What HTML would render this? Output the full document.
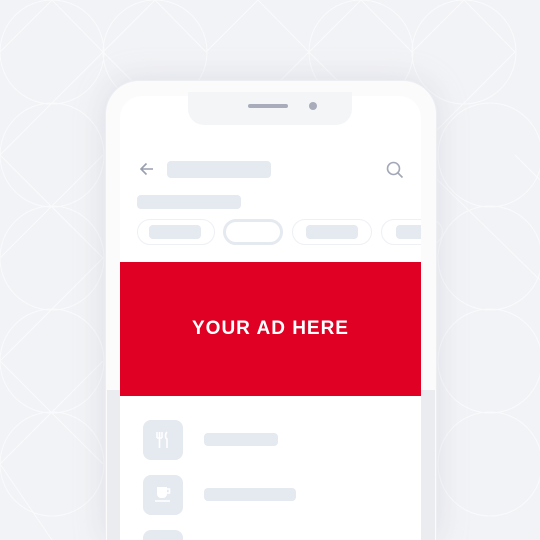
<!DOCTYPE html>
<html><head><style>
html,body{margin:0;padding:0;width:540px;height:540px;overflow:hidden}
body{background:#f2f3f6;position:relative;font-family:"Liberation Sans",sans-serif}
.a{position:absolute}
.bar{position:absolute;background:#e5e9f0;border-radius:4px}
</style></head><body>
<svg class="a" style="left:0;top:0" width="540" height="540">
<g stroke="#fff" stroke-width="1" fill="none" opacity="0.6">
<path d="M0 52 L52 0 M52 0 L103 52 M103 52 L155 0 L206 52 M206 52 L258 0 L309 52 M309 52 L361 0 L412 52 M412 52 L464 0 L515 52"/>
<path d="M0 155 L103 52 L206 155 L309 52 L412 155 L515 52 M0 155 L103 258 M0 258 L103 155 M0 361 L103 258 M0 361 L103 464 M0 464 L103 361 M0 464 L52 540 M515 155 L540 180 M412 155 L540 280"/>
<circle cx="52" cy="52" r="52"/><circle cx="155" cy="52" r="52"/><circle cx="361" cy="52" r="52"/><circle cx="464" cy="52" r="52"/>
<circle cx="52" cy="155" r="52"/><circle cx="52" cy="258" r="52"/><circle cx="52" cy="361" r="52"/><circle cx="52" cy="464" r="52"/>
<circle cx="490" cy="155" r="52"/><circle cx="490" cy="258" r="52"/><circle cx="490" cy="361" r="52"/><circle cx="490" cy="464" r="52"/>
</g></svg>
<div class="a" style="left:105px;top:80px;width:332px;height:460px;background:#fbfbfc;border-radius:34px 34px 0 0;box-shadow:0 0 30px rgba(180,185,200,0.35);border:1px solid #eceef2;border-bottom:none;box-sizing:border-box"></div>
<div class="a" style="left:107px;top:390px;width:13px;height:150px;background:#ebecef"></div>
<div class="a" style="left:421px;top:390px;width:14px;height:150px;background:#ebecef"></div>
<div class="a" style="left:120px;top:96px;width:301px;height:444px;background:#fff;border-radius:22px 22px 0 0"></div>
<div class="a" style="left:188px;top:92px;width:164px;height:33px;background:#f4f5f7;border-radius:0 0 16px 16px"></div>
<div class="a" style="left:248px;top:104px;width:40px;height:4px;background:#a9adbb;border-radius:2px"></div>
<div class="a" style="left:309px;top:102px;width:8px;height:8px;background:#a9adbb;border-radius:50%"></div>
<svg class="a" style="left:139px;top:161px" width="16" height="16"><path d="M14 8H2M7.5 2.5L2 8l5.5 5.5" stroke="#9a9fb0" stroke-width="1.6" fill="none"/></svg>
<div class="bar" style="left:167px;top:161px;width:104px;height:17px"></div>
<svg class="a" style="left:385px;top:160px" width="20" height="20"><circle cx="8.5" cy="8.5" r="6" stroke="#a3a8b8" stroke-width="1.6" fill="none"/><path d="M13 13l4.5 4.5" stroke="#a3a8b8" stroke-width="1.6"/></svg>
<div class="bar" style="left:137px;top:195px;width:104px;height:14px"></div>
<div class="a" style="left:137px;top:219px;width:76px;height:24px;border:1px solid #eef0f4;border-radius:13px"></div>
<div class="bar" style="left:149px;top:225px;width:52px;height:14px"></div>
<div class="a" style="left:223px;top:219px;width:54px;height:20px;border:3px solid #e5e9f0;border-radius:13px"></div>
<div class="a" style="left:292px;top:219px;width:78px;height:24px;border:1px solid #eef0f4;border-radius:13px"></div>
<div class="bar" style="left:306px;top:225px;width:52px;height:14px"></div>
<div class="a" style="left:381px;top:219px;width:60px;height:24px;border:1px solid #eef0f4;border-radius:13px"></div>
<div class="bar" style="left:396px;top:225px;width:40px;height:14px"></div>
<div class="a" style="left:421px;top:215px;width:15px;height:40px;background:#fbfbfc"></div>
<div class="a" style="left:120px;top:262px;width:301px;height:134px;background:#e00024;color:#fff;font-weight:bold;font-size:19px;letter-spacing:1px;text-align:center;line-height:134px">YOUR AD HERE</div>
<div class="a" style="left:143px;top:420px;width:40px;height:40px;background:#e5e9f0;border-radius:8px"></div>
<svg class="a" style="left:155px;top:431px" width="16" height="18"><path d="M2 1v6M4.5 1v6M7 1v6M2 7h5M4.5 7v10M12 1c-2 2-2 6 0 7v9" stroke="#fff" stroke-width="1.6" fill="none"/></svg>
<div class="bar" style="left:204px;top:433px;width:74px;height:13px"></div>
<div class="a" style="left:143px;top:475px;width:40px;height:40px;background:#e5e9f0;border-radius:8px"></div>
<svg class="a" style="left:154px;top:486px" width="20" height="18"><path d="M3 1h10v7a4 4 0 0 1-4 4H7a4 4 0 0 1-4-4z" fill="#fff"/><path d="M13 3h2.5v4H13" stroke="#fff" stroke-width="1.6" fill="none"/><path d="M1 15h15" stroke="#fff" stroke-width="1.5"/></svg>
<div class="bar" style="left:204px;top:488px;width:92px;height:13px"></div>
<div class="a" style="left:143px;top:530px;width:40px;height:10px;background:#e5e9f0;border-radius:8px 8px 0 0"></div>
</body></html>
